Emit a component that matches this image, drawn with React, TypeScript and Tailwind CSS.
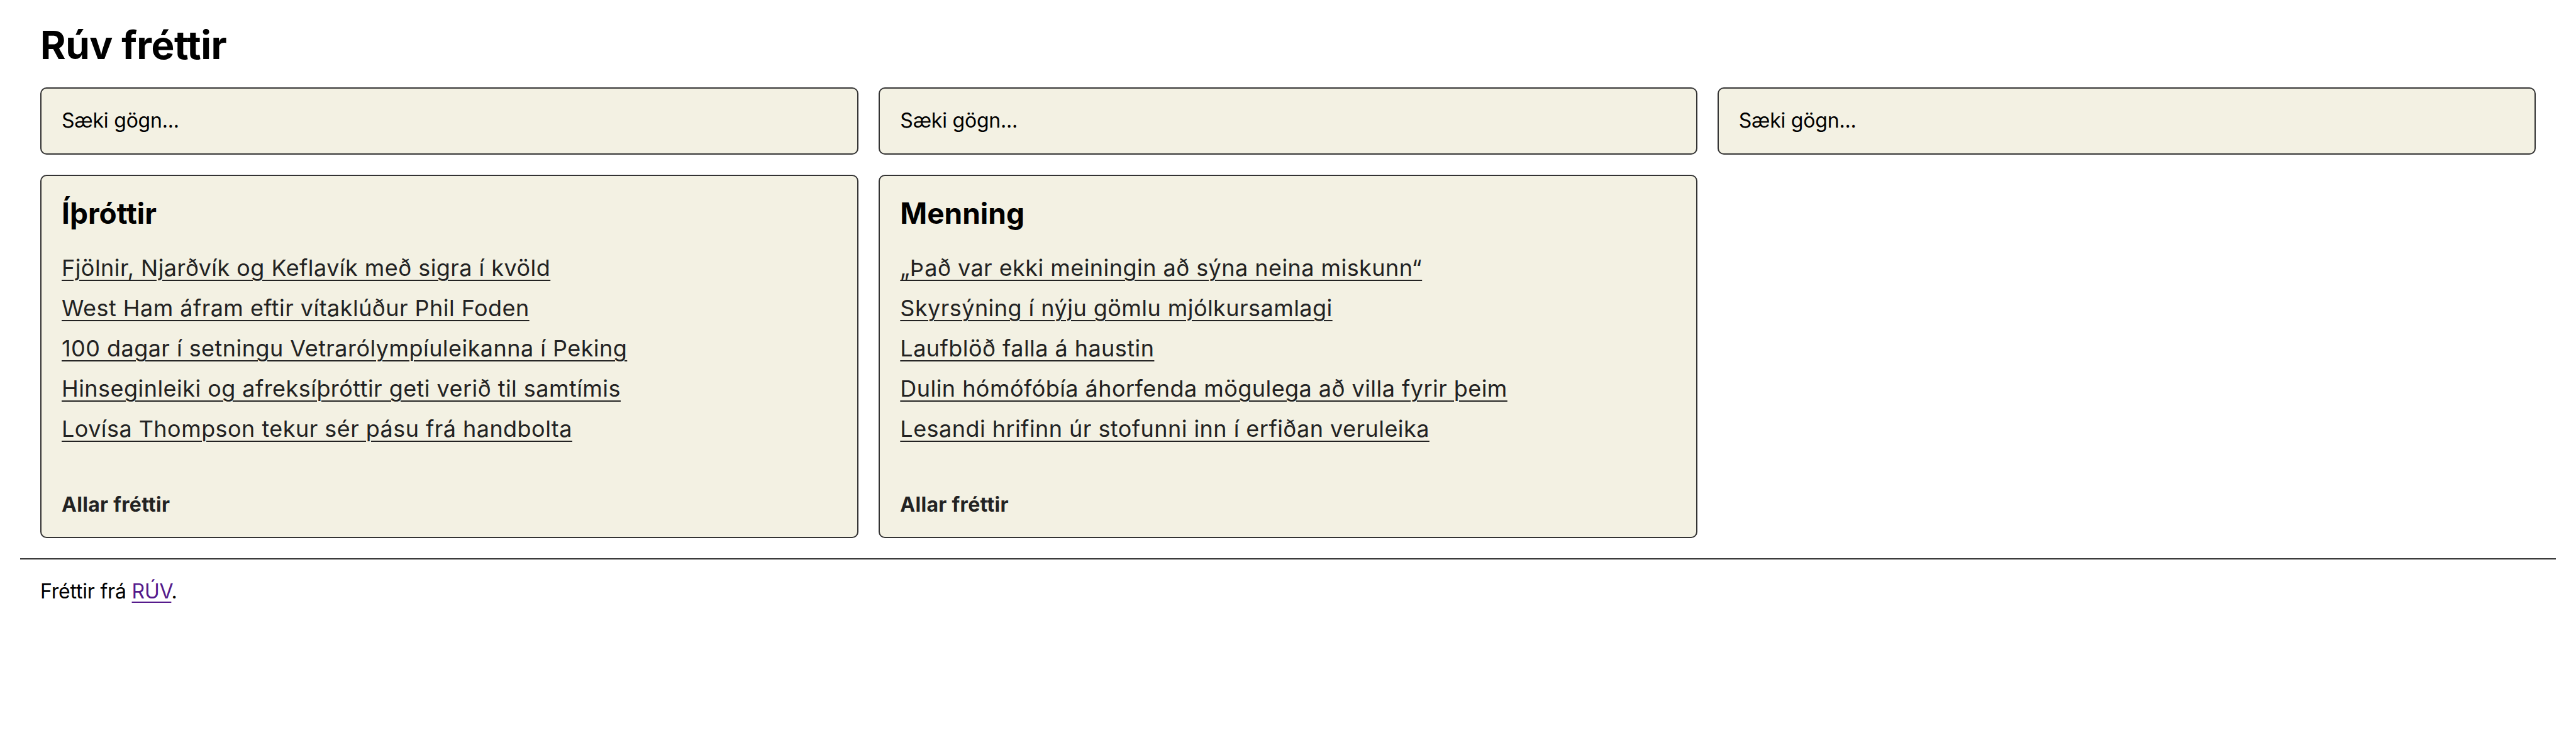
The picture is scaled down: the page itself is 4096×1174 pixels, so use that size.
const categories = [
  {
    title: 'Íþróttir',
    items: [
      'Fjölnir, Njarðvík og Keflavík með sigra í kvöld',
      'West Ham áfram eftir vítaklúður Phil Foden',
      '100 dagar í setningu Vetrarólympíuleikanna í Peking',
      'Hinseginleiki og afreksíþróttir geti verið til samtímis',
      'Lovísa Thompson tekur sér pásu frá handbolta',
    ],
  },
  {
    title: 'Menning',
    items: [
      '„Það var ekki meiningin að sýna neina miskunn“',
      'Skyrsýning í nýju gömlu mjólkursamlagi',
      'Laufblöð falla á haustin',
      'Dulin hómófóbía áhorfenda mögulega að villa fyrir þeim',
      'Lesandi hrifinn úr stofunni inn í erfiðan veruleika',
    ],
  },
];

function Loading() {
  return (
    <div className="rounded-[10px] border-2 border-[#333] bg-[#f3f1e3] p-8 text-[32px] leading-[1.2] tracking-[-0.2px]">
      Sæki gögn...
    </div>
  );
}

function NewsCard({ title, items }: { title: string; items: string[] }) {
  return (
    <section className="flex flex-col rounded-[10px] border-2 border-[#333] bg-[#f3f1e3] p-8">
      <h2 className="text-[46px] font-bold leading-[1.2] text-black">{title}</h2>
      <ul className="mt-[27px] text-[36px] tracking-[0.45px] text-[#222]">
        {items.map((item) => (
          <li key={item} className="leading-[64px]">
            <a
              href="#"
              className="underline decoration-2 underline-offset-[6px]"
            >
              {item}
            </a>
          </li>
        ))}
      </ul>
      <a href="#" className="mt-[70px] text-[32px] font-bold leading-[1.2] tracking-[0.3px] text-[#222]">
        Allar fréttir
      </a>
    </section>
  );
}

export default function App() {
  return (
    <div className="min-h-[1174px] bg-white px-8 pt-[35px] font-['Inter',sans-serif] text-black">
      <main className="px-8">
        <h1 className="text-[62px] font-bold leading-[1.2] tracking-[-0.5px]">Rúv fréttir</h1>
        <div className="mt-[30px] grid grid-cols-3 items-start gap-8">
          <Loading />
          <Loading />
          <Loading />
          {categories.map((c) => (
            <NewsCard key={c.title} title={c.title} items={c.items} />
          ))}
        </div>
      </main>
      <hr className="mt-8 border-t-2 border-[#333]" />
      <footer className="px-8 pt-8 text-[32px] leading-[1.2] tracking-[-0.2px]">
        Fréttir frá{' '}
        <a href="#" className="text-[#551a8b] underline decoration-2 underline-offset-[5px]">
          RÚV
        </a>
        .
      </footer>
    </div>
  );
}
